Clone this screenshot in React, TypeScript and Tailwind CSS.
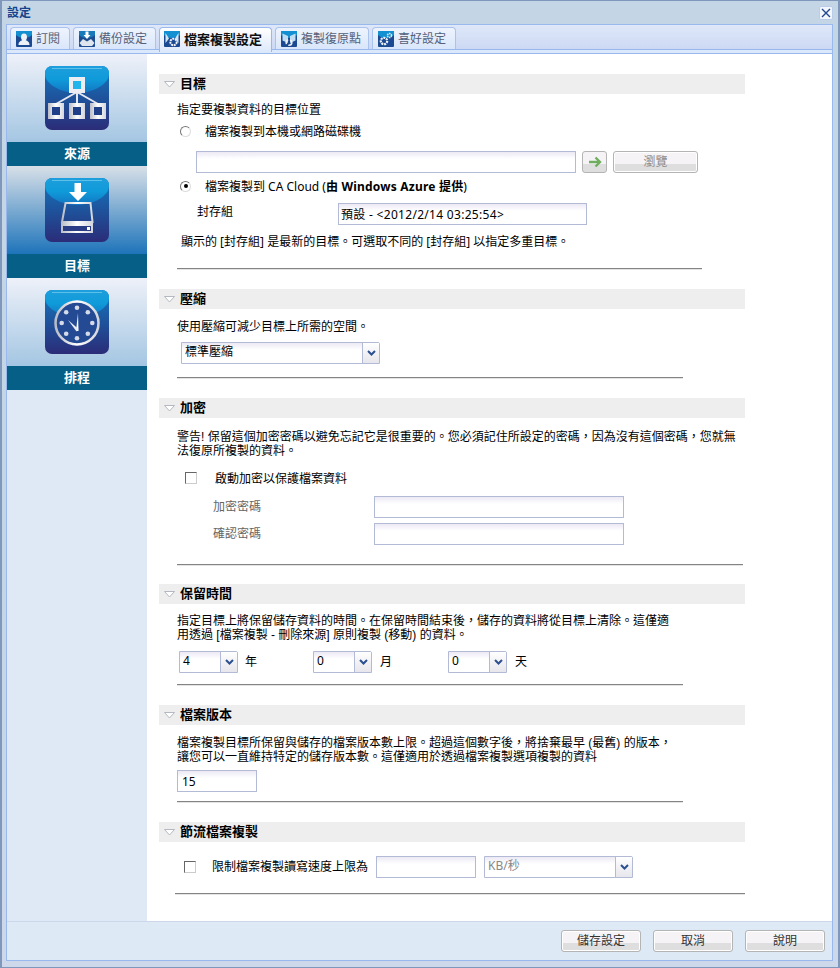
import { ReactNode } from "react";

const FONT = "font-['Noto_Sans','Noto_Sans_CJK_TC',sans-serif]";
const PARA = "font-['Liberation_Sans','Noto_Sans_CJK_TC',sans-serif]";
const COMMA = "\uFF0C";

function GlossBase({ id }: { id: string }) {
  return (
    <>
      <defs>
        <linearGradient id={id + "-bg"} x1="0" y1="0" x2="0" y2="1">
          <stop offset="0" stopColor="#1378c0" />
          <stop offset="0.55" stopColor="#1f4f98" />
          <stop offset="1" stopColor="#2c2c78" />
        </linearGradient>
        <linearGradient id={id + "-gl"} x1="0" y1="0" x2="0" y2="1">
          <stop offset="0" stopColor="#1e9fdc" />
          <stop offset="0.5" stopColor="#0f9ada" />
          <stop offset="1" stopColor="#1376c2" />
        </linearGradient>
        <linearGradient id={id + "-m"} x1="0" y1="0" x2="1" y2="0">
          <stop offset="0" stopColor="#b9bcc6" />
          <stop offset="0.5" stopColor="#ffffff" />
          <stop offset="1" stopColor="#d3d5dd" />
        </linearGradient>
      </defs>
      <rect width="64" height="64" rx="7" fill={`url(#${id}-bg)`} />
      <path d="M0 8Q0 0 8 0H56Q64 0 64 8C64 18 48 27 32 27C16 27 0 18 0 8Z" fill={`url(#${id}-gl)`} />
      <path d="M7 2.5H57" stroke="#5cc0ea" strokeWidth="1" />
    </>
  );
}

function SourceIcon() {
  return (
    <svg width="64" height="64" viewBox="0 0 64 64">
      <GlossBase id="src" />
      <path d="M32 26L11 38M32 26V38M32 26L53 38" stroke="#e6e8ee" strokeWidth="2" fill="none" />
      <rect x="24" y="11" width="16" height="16" fill="#eceef3" />
      <rect x="28" y="15" width="8" height="8" fill="#22b5ec" />
      {[3, 24, 45].map((x) => (
        <g key={x}>
          <rect x={x} y="37" width="16" height="16" fill="url(#src-m)" />
          <rect x={x + 4} y="41" width="8" height="8" fill="#1f3f88" />
        </g>
      ))}
    </svg>
  );
}

function TargetIcon() {
  return (
    <svg width="64" height="64" viewBox="0 0 64 64">
      <GlossBase id="tgt" />
      <path d="M29.5 5H36V14H42L33 23L24 14H29.5Z" fill="#ffffff" />
      <path d="M20.5 25H45.5L47.5 44H17Z" fill="none" stroke="url(#tgt-m)" strokeWidth="2" />
      <rect x="16" y="44" width="32" height="11" fill="url(#tgt-m)" />
      <rect x="18" y="48" width="28" height="5" fill="#2b3c86" />
      <rect x="42" y="49" width="3" height="3" fill="#ffffff" />
    </svg>
  );
}

function ClockIcon() {
  const dots = [0, 1, 2, 3, 4, 5, 6, 7].map((i) => {
    const a = (i * Math.PI) / 4;
    return { x: 32 + 15.3 * Math.sin(a), y: 33 - 15.3 * Math.cos(a) };
  });
  return (
    <svg width="64" height="64" viewBox="0 0 64 64">
      <GlossBase id="clk" />
      <circle cx="32" cy="33" r="21.5" fill="#234a93" stroke="url(#clk-m)" strokeWidth="2.5" />
      {dots.map((d, i) => (
        <circle key={i} cx={d.x} cy={d.y} r="2.3" fill="#d5dbe8" />
      ))}
      <path d="M33 23L33.5 41L31 41Z" fill="#ffffff" />
      <path d="M23 30L33.5 39L31.5 41.5Z" fill="#e8ebf2" />
    </svg>
  );
}

function TabIcon({ kind }: { kind: string }) {
  return (
    <svg width="16" height="16" viewBox="0 0 16 16" className="shrink-0">
      <rect width="16" height="16" rx="1" fill="#1b4a92" />
      <path d="M0 1Q0 0 1 0H15Q16 0 16 1V4C12 8 4 8 0 4Z" fill="#1390d2" />
      {kind === "user" && (
        <path d="M8 2.5C10.2 2.5 11 4.2 11 6C11 7.5 10.4 8.6 9.8 9.3C11.5 10 13.5 10.8 13.5 14H2.5C2.5 10.8 4.5 10 6.2 9.3C5.6 8.6 5 7.5 5 6C5 4.2 5.8 2.5 8 2.5Z" fill="#eef1f6" />
      )}
      {kind === "backup" && (
        <>
          <rect width="16" height="16" fill="#26508f" opacity="0.35" />
          <path d="M6.5 0.5H9.5V4H11.5L8 8L4.5 4H6.5Z" fill="#ffffff" />
          <path d="M4 8L0.5 12L3 15H13L15.5 12L12 8L8 10.5Z" fill="#dfe5ee" />
        </>
      )}
      {kind === "copy" && (
        <>
          <path d="M1.5 2L5 7.5L1.5 12ZM14.5 2L11 7.5L14.5 12Z" fill="#cfe6f5" />
          <circle cx="9.5" cy="11" r="3.2" fill="none" stroke="#eef1f6" strokeWidth="2" strokeDasharray="2 0.7" />
        </>
      )}
      {kind === "restore" && (
        <>
          <path d="M1.5 2.5L7 5V12L1.5 9.5ZM14.5 2.5L9 5V12L14.5 9.5Z" fill="#bfdcf0" />
          <circle cx="8" cy="11.5" r="2.8" fill="none" stroke="#eef1f6" strokeWidth="1.6" strokeDasharray="5 2" />
        </>
      )}
      {kind === "prefs" && (
        <>
          <circle cx="6" cy="10" r="3.2" fill="none" stroke="#eef1f6" strokeWidth="2.2" strokeDasharray="2 0.8" />
          <circle cx="11.5" cy="4.5" r="2" fill="none" stroke="#dfe5ee" strokeWidth="1.6" strokeDasharray="1.4 0.6" />
        </>
      )}
    </svg>
  );
}

function Tab({ kind, label, width, active }: { kind: string; label: string; width: string; active?: boolean }) {
  if (active) {
    return (
      <div className={`${width} relative z-10 -mb-[3px] flex h-[25px] items-center gap-[4px] rounded-t-[4px] border border-b-0 border-[#99b9ee] bg-[linear-gradient(#ffffff,#dbe8fb)] pb-[2px] pl-[4px] text-[13px] font-bold text-[#111111]`}>
        <TabIcon kind={kind} />
        {label}
      </div>
    );
  }
  return (
    <div className={`${width} flex h-[22px] items-center gap-[4px] rounded-t-[4px] border border-b-0 border-[#a9c2ee] bg-[linear-gradient(#eef4fd,#d9e6fa)] pl-[5px] text-[12px] text-[#55617a]`}>
      <TabIcon kind={kind} />
      {label}
    </div>
  );
}

function SideItem({ icon, label, active }: { icon: ReactNode; label: string; active?: boolean }) {
  return (
    <div>
      <div className={`flex h-[88px] items-start justify-center pt-[12px] ${active ? "bg-[linear-gradient(#d8e0e8,#1e74ba)]" : "bg-[linear-gradient(#eef1f9,#a4c6e2)]"}`}>
        {icon}
      </div>
      <div className="flex h-[24px] items-center justify-center bg-[#065f87] pb-[2px] text-[13px] font-bold text-white">{label}</div>
    </div>
  );
}

function SectionHeader({ title, className = "" }: { title: string; className?: string }) {
  return (
    <div className={`flex h-[20px] w-[586px] items-center bg-[#eeeeee] pb-[2px] pl-[5px] text-[13px] font-bold text-black ${className}`}>
      <svg width="11" height="7" viewBox="0 0 11 7" className="mr-[5px] mt-[3px]">
        <path d="M0.5 0.5H10.5L5.5 6Z" fill="#ffffff" stroke="#b4b8c0" />
      </svg>
      {title}
    </div>
  );
}

function Rule({ className }: { className: string }) {
  return <div className={`h-[2px] border-t border-[#848484] bg-[#e4e4e4] ${className}`} />;
}

function TextBox({ width, value, className = "" }: { width: string; value?: string; className?: string }) {
  return (
    <input
      readOnly
      value={value ?? ""}
      className={`${width} h-[22px] border border-[#b2bad6] bg-[linear-gradient(#ece9f4,#ffffff_35%)] px-[4px] text-[12px] text-black outline-none ${className}`}
    />
  );
}

function Select({ width, value, muted }: { width: string; value: string; muted?: boolean }) {
  return (
    <div className={`${width} flex h-[22px] items-stretch rounded-tr-[2px] border border-[#b2bad6] bg-[linear-gradient(#ece9f4,#ffffff_35%)] text-[12px]`}>
      <span className={`flex-1 pl-[3px] leading-[18px] ${muted ? "text-[#888888]" : "text-black"}`}>{value}</span>
      <span className="flex w-[17px] items-center justify-center border-l border-[#b2bad6] bg-[linear-gradient(#ffffff,#e6e6ec)]">
        <svg width="9" height="6" viewBox="0 0 9 6">
          <path d="M1 1L4.5 4.5L8 1" fill="none" stroke="#2b4f8f" strokeWidth="2" />
        </svg>
      </span>
    </div>
  );
}

function Button({ label, width, muted }: { label: string; width: string; muted?: boolean }) {
  return (
    <div className={`${width} flex h-[22px] items-center justify-center rounded-[3px] border border-[#b4b4b4] bg-[linear-gradient(#f6f3f7_60%,#dedede_60%)] text-[12px] shadow-[inset_0_0_0_1px_#ffffff] ${muted ? "text-[#8a8a8a]" : "text-[#333333]"}`}>
      {label}
    </div>
  );
}

function Radio({ checked }: { checked?: boolean }) {
  return (
    <span className="flex h-[11px] w-[11px] items-center justify-center rounded-full border border-t-[#777777] border-l-[#777777] border-r-[#dddddd] border-b-[#dddddd] bg-white">
      {checked && <span className="h-[4px] w-[4px] rounded-full bg-black" />}
    </span>
  );
}

function Check() {
  return <span className="block h-[12px] w-[12px] border border-t-[#666666] border-l-[#666666] border-r-[#cccccc] border-b-[#cccccc] bg-white" />;
}

export default function App() {
  return (
    <div lang="zh-TW" className={`${FONT} flex h-[968px] w-[840px] flex-col overflow-hidden border-x-2 border-y border-[#7f97bb] bg-[linear-gradient(#c4d6e5,#c4d6e5_60%,#cdd8ea)] text-[12px] leading-[14px] text-black`}>
      {/* Title bar */}
      <div className="flex h-[23px] shrink-0 items-center justify-between px-[5px]">
        <span className="text-[12px] font-bold text-[#15428b]">設定</span>
        <span className="flex h-[14px] w-[14px] items-center justify-center rounded-[2px] border border-[#b9cdea] bg-[#f3f7fd]">
          <svg width="10" height="10" viewBox="0 0 10 10">
            <path d="M1 1L9 9M9 1L1 9" stroke="#23468f" strokeWidth="1.4" />
          </svg>
        </span>
      </div>

      <div className="ml-[4px] mr-[5px] flex h-[937px] shrink-0 flex-col border border-[#99b9ee]">
        {/* Tabs */}
        <div className="h-[29px] shrink-0 bg-[linear-gradient(#dfe8f9,#c9d5f3)]">
          <div className="flex h-[25px] items-end gap-[3px] border-b border-[#99b9ee] pl-[3px]">
            <Tab kind="user" label="訂閱" width="w-[60px]" />
            <Tab kind="backup" label="備份設定" width="w-[83px]" />
            <Tab kind="copy" label="檔案複製設定" width="w-[113px]" active />
            <Tab kind="restore" label="複製復原點" width="w-[94px]" />
            <Tab kind="prefs" label="喜好設定" width="w-[84px]" />
          </div>
          <div className="h-[4px] border-b border-[#99b9ee] bg-[#dbe8fb]" />
        </div>

        <div className="flex h-[867px] shrink-0">
          {/* Sidebar */}
          <div className="w-[140px] shrink-0 bg-[#dfe9f5]">
            <SideItem icon={<SourceIcon />} label="來源" />
            <SideItem icon={<TargetIcon />} label="目標" active />
            <SideItem icon={<ClockIcon />} label="排程" />
          </div>

          {/* Main */}
          <div className="flex-1 whitespace-nowrap bg-white pl-[12px] pt-[20px]">
            <SectionHeader title="目標" />
            <div className="ml-[18px] mt-[8px] h-[16px] leading-[16px]">指定要複製資料的目標位置</div>
            <div className="ml-[21px] mt-[5px] flex h-[16px] items-center gap-[14px]">
              <Radio />
              <span className="pt-[1px]">檔案複製到本機或網路磁碟機</span>
            </div>
            <div className="ml-[37px] mt-[12px] flex items-center">
              <TextBox width="w-[380px]" />
              <div className="ml-[6px] flex h-[22px] w-[25px] items-center justify-center rounded-[3px] border border-[#b4b4b4] bg-[linear-gradient(#f6f3f7_60%,#dedede_60%)]">
                <svg width="14" height="12" viewBox="0 0 14 12">
                  <path d="M1 6H12M7.5 1.5L12 6L7.5 10.5" fill="none" stroke="#6fae5f" strokeWidth="2.4" />
                </svg>
              </div>
              <div className="ml-[6px]">
                <Button label="瀏覽" width="w-[85px]" muted />
              </div>
            </div>
            <div className="ml-[21px] mt-[5px] flex h-[16px] items-center gap-[14px]">
              <Radio checked />
              <span className="pt-[1px]">
                檔案複製到 CA Cloud (<b className="tracking-[0.2px]">由 Windows Azure 提供</b>)
              </span>
            </div>
            <div className="ml-[38px] mt-[9px] flex">
              <span className="w-[141px] leading-[18px]">封存組</span>
              <TextBox width="w-[249px]" value="預設 - <2012/2/14 03:25:54>" className="pl-[2px] tracking-[0.3px]" />
            </div>
            <div className="ml-[22px] mt-[9px] h-[16px] leading-[16px]">顯示的 [封存組] 是最新的目標。可選取不同的 [封存組] 以指定多重目標。</div>
            <Rule className="ml-[18px] mt-[18px] w-[525px]" />

            <SectionHeader title="壓縮" className="mt-[19px]" />
            <div className="ml-[18px] mt-[10px] h-[16px] leading-[16px]">使用壓縮可減少目標上所需的空間。</div>
            <div className="ml-[22px] mt-[7px]">
              <Select width="w-[199px]" value="標準壓縮" />
            </div>
            <Rule className="ml-[18px] mt-[13px] w-[506px]" />

            <SectionHeader title="加密" className="mt-[19px]" />
            <div className={`${PARA} ml-[18px] mt-[12px]`}>
              <div className="h-[14px]">{`警告! 保留這個加密密碼以避免忘記它是很重要的。您必須記住所設定的密碼${COMMA}因為沒有這個密碼${COMMA}您就無`}</div>
              <div className="h-[14px]">法復原所複製的資料。</div>
            </div>
            <div className="ml-[26px] mt-[12px] flex h-[16px] items-center gap-[18px]">
              <Check />
              <span className="pt-[1px]">啟動加密以保護檔案資料</span>
            </div>
            <div className="ml-[54px] mt-[10px] flex items-center text-[#666666]">
              <span className="w-[161px]">加密密碼</span>
              <TextBox width="w-[250px]" />
            </div>
            <div className="ml-[54px] mt-[5px] flex items-center text-[#666666]">
              <span className="w-[161px]">確認密碼</span>
              <TextBox width="w-[250px]" />
            </div>
            <Rule className="ml-[18px] mt-[19px] w-[566px]" />

            <SectionHeader title="保留時間" className="mt-[18px]" />
            <div className={`${PARA} ml-[18px] mt-[10px]`}>
              <div className="h-[14px]">{`指定目標上將保留儲存資料的時間。在保留時間結束後${COMMA}儲存的資料將從目標上清除。這僅適`}</div>
              <div className="h-[14px]">用透過 [檔案複製 - 刪除來源] 原則複製 (移動) 的資料。</div>
            </div>
            <div className="ml-[20px] mt-[9px] flex items-center">
              <Select width="w-[59px]" value="4" />
              <span className="ml-[7px] w-[68px]">年</span>
              <Select width="w-[59px]" value="0" />
              <span className="ml-[8px] w-[68px]">月</span>
              <Select width="w-[59px]" value="0" />
              <span className="ml-[8px]">天</span>
            </div>
            <Rule className="ml-[18px] mt-[11px] w-[506px]" />

            <SectionHeader title="檔案版本" className="mt-[19px]" />
            <div className={`${PARA} ml-[18px] mt-[11px]`}>
              <div className="h-[14px]">{`檔案複製目標所保留與儲存的檔案版本數上限。超過這個數字後${COMMA}將捨棄最早 (最舊) 的版本${COMMA}`}</div>
              <div className="h-[14px]">讓您可以一直維持特定的儲存版本數。這僅適用於透過檔案複製選項複製的資料</div>
            </div>
            <div className="ml-[18px] mt-[6px]">
              <TextBox width="w-[80px]" value="15" />
            </div>
            <Rule className="ml-[18px] mt-[9px] w-[506px]" />

            <SectionHeader title="節流檔案複製" className="mt-[19px]" />
            <div className="ml-[25px] mt-[14px] flex items-center">
              <Check />
              <span className="ml-[16px] w-[164px]">限制檔案複製讀寫速度上限為</span>
              <TextBox width="w-[100px]" />
              <div className="ml-[8px]">
                <Select width="w-[149px]" value="KB/秒" muted />
              </div>
            </div>
            <Rule className="ml-[16px] mt-[15px] w-[570px]" />
          </div>
        </div>

        {/* Footer */}
        <div className="mt-[1px] flex h-[38px] shrink-0 items-start justify-end gap-[12px] bg-[#dde9f5] pr-[7px] pt-[8px]">
          <Button label="儲存設定" width="w-[80px]" />
          <Button label="取消" width="w-[80px]" />
          <Button label="說明" width="w-[80px]" />
        </div>
      </div>
    </div>
  );
}
